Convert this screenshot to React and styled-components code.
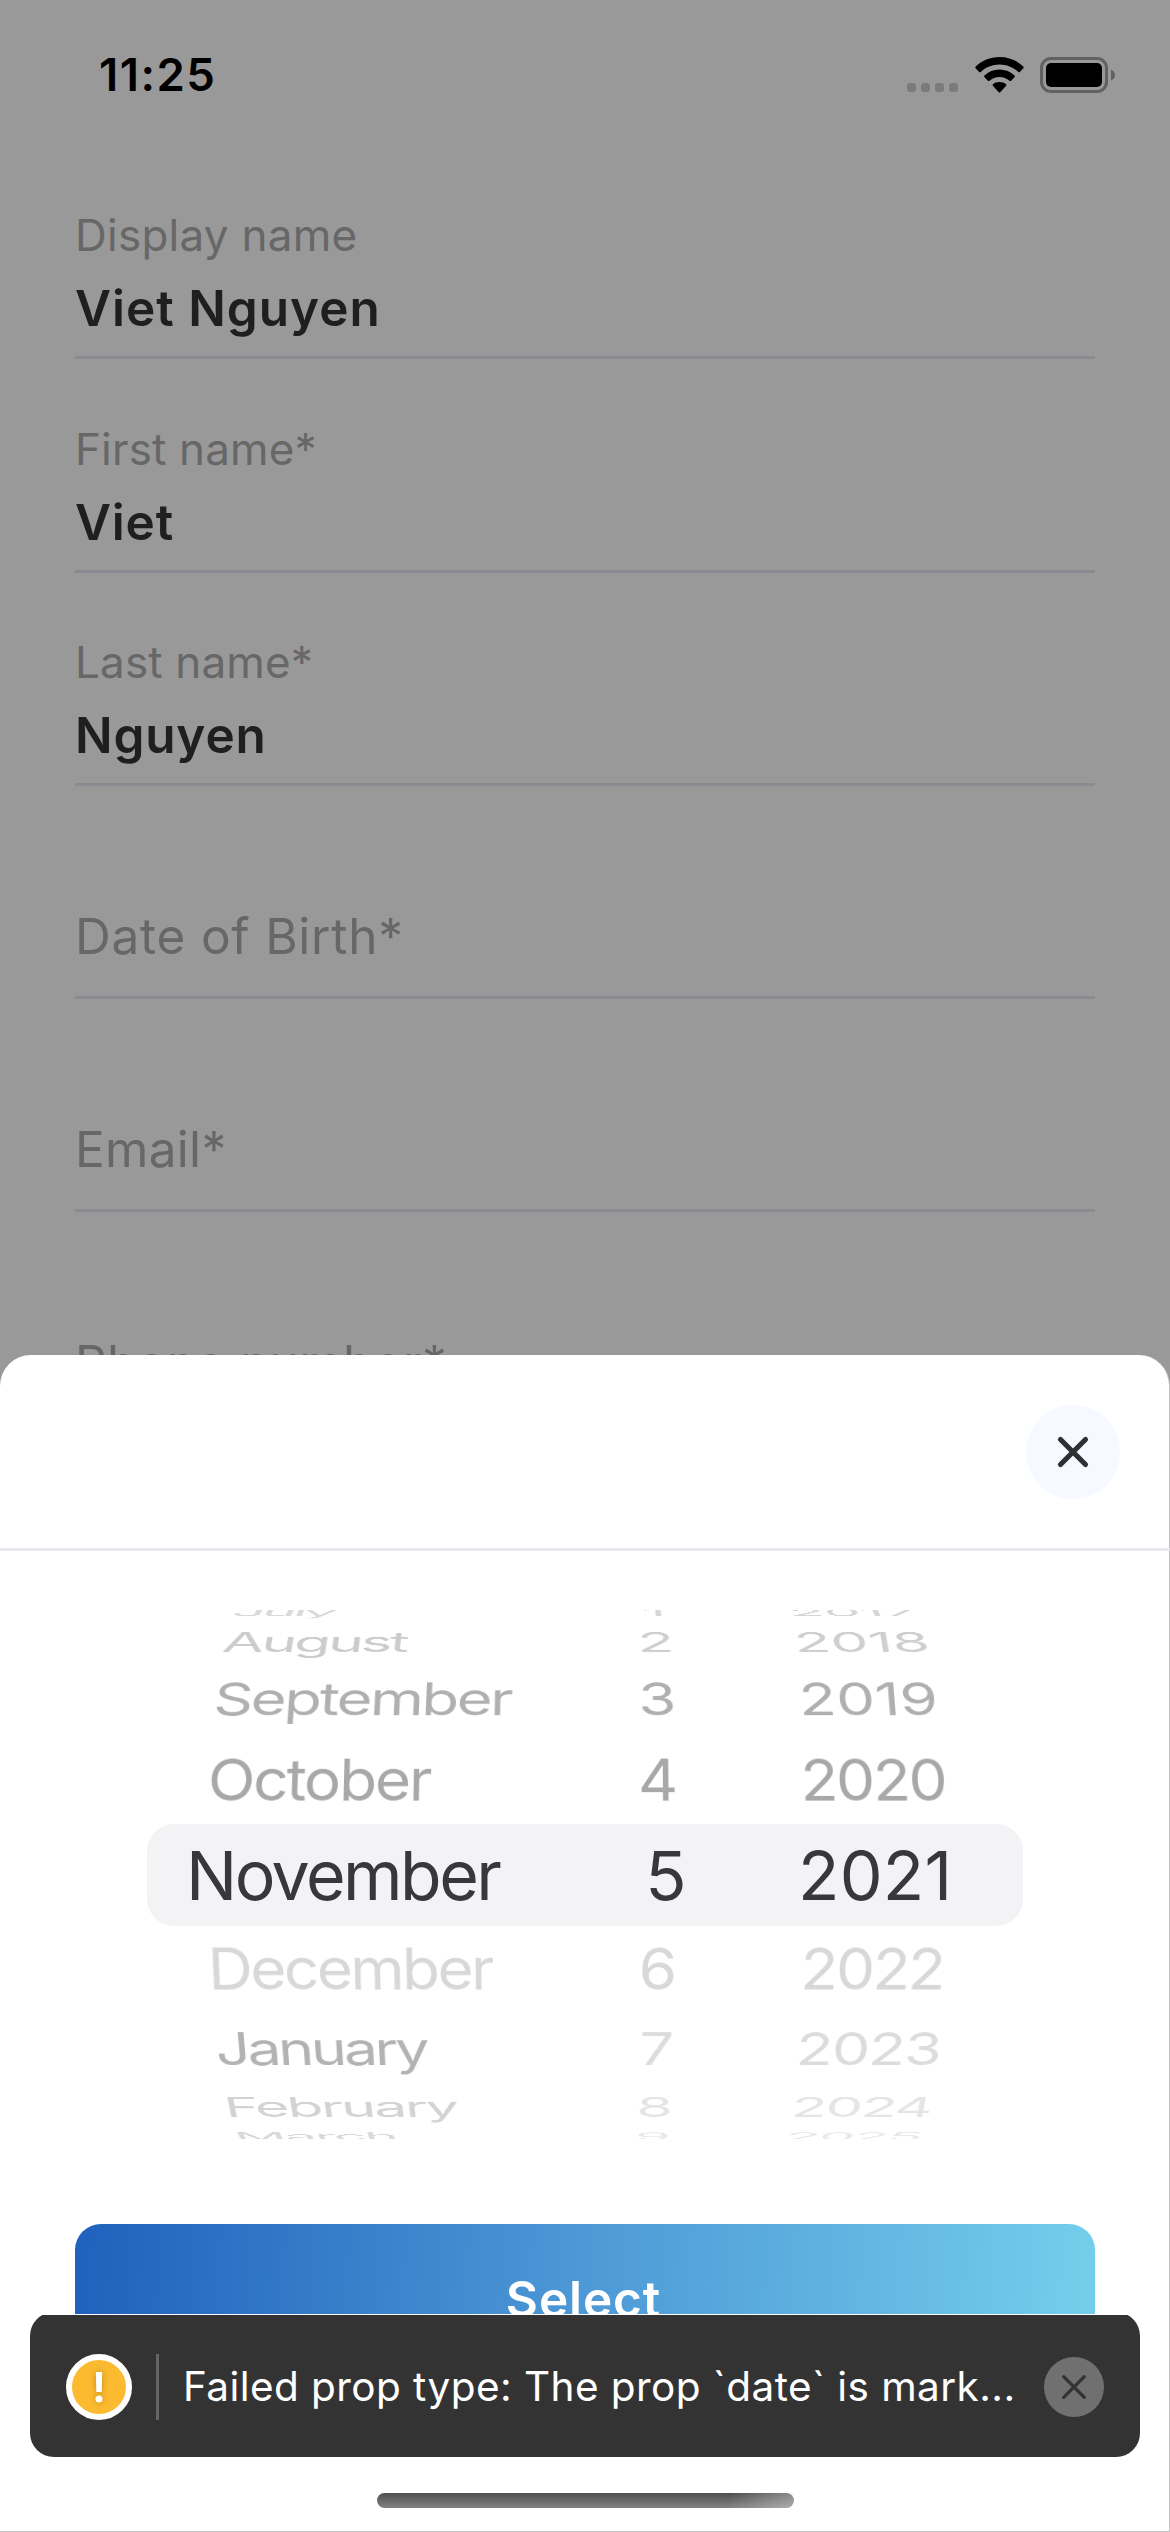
import React from "react";
import styled, { createGlobalStyle } from "styled-components";

const GlobalStyle = createGlobalStyle`
  *, *::before, *::after { box-sizing: border-box; }
  body {
    margin: 0;
    font-family: Inter, "Liberation Sans", sans-serif;
    background: #999999;
  }
`;

const Screen = styled.div`
  position: relative;
  width: 1170px;
  height: 2532px;
  overflow: hidden;
  background: #999999;
`;

/* ---------- status bar ---------- */

const StatusBar = styled.header`
  display: flex;
  align-items: center;
  justify-content: space-between;
  height: 149px;
  padding: 0 55px 0 99px;
`;

const Clock = styled.span`
  font-size: 45.5px;
  font-weight: 600;
  line-height: 50px;
  letter-spacing: 1.5px;
  color: #000;
`;

const StatusIcons = styled.div`
  display: flex;
  align-items: center;
`;

const SignalDots = styled.div`
  display: flex;
  gap: 5px;
  margin: 25px 17px 0 0;
`;

const SignalDot = styled.i`
  width: 9px;
  height: 9px;
  border-radius: 3px;
  background: #7b7b7b;
`;

const WifiIcon = styled.svg`
  width: 49px;
  height: 36px;
  margin-right: 16px;
`;

const BatteryIcon = styled.svg`
  width: 75px;
  height: 36px;
`;

/* ---------- form ---------- */

const Form = styled.main`
  display: flex;
  flex-direction: column;
  padding: 0 75px;
  margin-top: -3px;
`;

const Field = styled.div`
  display: flex;
  flex-direction: column;
  justify-content: flex-end;
  height: 213.25px;
  border-bottom: 3px solid #888b90;
`;

const FieldLabel = styled.span`
  font-size: 44px;
  line-height: 74px;
  letter-spacing: ${(p) => p.$tracking ?? 0.15}px;
  color: #676767;
`;

const FieldValue = styled.span`
  font-size: 49.5px;
  font-weight: 600;
  line-height: 72px;
  letter-spacing: ${(p) => p.$tracking}px;
  margin-bottom: 12px;
  color: #1f1f1f;
`;

const FieldPlaceholder = styled.span`
  font-size: 49.5px;
  line-height: 72px;
  letter-spacing: ${(p) => p.$tracking}px;
  margin-bottom: 24px;
  color: #676767;
`;

/* ---------- bottom sheet ---------- */

const Sheet = styled.section`
  position: absolute;
  left: 0;
  right: 0;
  bottom: 0;
  height: 1177px;
  display: flex;
  flex-direction: column;
  background: #fff;
  border-radius: 31px 31px 0 0;
  border-right: 1px solid #c0c0c0;
  border-bottom: 1px solid #c4c4c4;
`;

const SheetHeader = styled.div`
  display: flex;
  justify-content: flex-end;
  align-items: center;
  height: 196px;
  padding: 0 50px 0 0;
  margin-right: -1px;
  border-bottom: 3px solid #e6eaee;
`;

const CloseButton = styled.button`
  display: flex;
  align-items: center;
  justify-content: center;
  width: 94px;
  height: 94px;
  padding: 0;
  border: 0;
  border-radius: 50%;
  background: #f6f9ff;
`;

const Wheel = styled.div`
  display: flex;
  flex-direction: column;
  justify-content: center;
  width: 876px;
  height: 529px;
  margin: 59px auto 0 147px;
  overflow: hidden;
`;

const WheelRow = styled.div`
  flex: none;
  display: grid;
  grid-template-columns: 410px 80px 1fr;
  height: ${(p) => p.$height}px;
  padding-left: 61px;
  line-height: ${(p) => p.$height}px;
  font-size: 62px;
  white-space: nowrap;
  transform: perspective(3600px) rotateX(${(p) => p.$tilt}deg) scaleX(${(p) => p.$scale});
`;

const SelectedRow = styled(WheelRow)`
  grid-template-columns: 440px 80px 1fr;
  padding-left: 39px;
  font-size: 68px;
  transform: none;
  border-radius: 27px;
  background: #f3f3f5;
`;

const WheelCell = styled.span`
  color: ${(p) => p.$color};
  letter-spacing: ${(p) => p.$tracking ?? 0}px;
  text-align: ${(p) => p.$align ?? "left"};
  padding-left: ${(p) => p.$inset ?? 0}px;
`;

const SelectButton = styled.button`
  flex: none;
  display: flex;
  align-items: center;
  justify-content: center;
  width: 1020px;
  height: 150px;
  margin: 85px 0 0 75px;
  padding: 0 3px 0 0;
  border: 0;
  border-radius: 26px;
  background: linear-gradient(93deg, #2062bd 1%, #4f9bd7 52%, #73ceeb 99%);
  color: #fff;
  font-family: inherit;
  font-size: 49.5px;
  font-weight: 600;
  letter-spacing: 0.9px;
`;

/* ---------- warning toast ---------- */

const ToastLayer = styled.aside`
  position: absolute;
  left: 0;
  top: 2314px;
  width: 1169px;
  height: 143px;
  overflow: hidden;
  border-top: 1px solid #fff;
  background: #fff;
`;

const Toast = styled.div`
  display: flex;
  align-items: center;
  width: 1110px;
  height: 145px;
  margin: -3px 0 0 30px;
  padding: 5px 36px 0 36px;
  border-radius: 24px;
  background: #333333;
`;

const WarningBadge = styled.span`
  flex: none;
  display: flex;
  align-items: center;
  justify-content: center;
  width: 66px;
  height: 66px;
  border: 6px solid #fff;
  border-radius: 50%;
  background: #fbba30;
`;

const WarningMark = styled.svg`
  width: 54px;
  height: 54px;
  filter: drop-shadow(0 0 3px rgba(120, 80, 0, 0.45));
`;

const ToastDivider = styled.i`
  flex: none;
  width: 3px;
  height: 66px;
  margin: 0 24px;
  background: #656565;
`;

const ToastText = styled.span`
  flex: 1;
  font-size: 40.5px;
  line-height: 60px;
  letter-spacing: 0.43px;
  white-space: nowrap;
  color: #fff;
`;

const DismissButton = styled.button`
  flex: none;
  display: flex;
  align-items: center;
  justify-content: center;
  width: 60px;
  height: 60px;
  padding: 0;
  border: 0;
  border-radius: 50%;
  background: #707070;
`;

const HomeIndicator = styled.div`
  width: 417px;
  height: 15px;
  position: absolute;
  left: 377px;
  bottom: 24px;
  border-radius: 7.5px;
  background: linear-gradient(102deg, transparent 84%, rgba(255, 255, 255, 0.35) 100%),
    linear-gradient(#4f4f4f, #828282);
`;

/* ---------- content ---------- */

const filledFields = [
  { label: "Display name", labelTracking: 0.26, value: "Viet Nguyen", tracking: 0.99 },
  { label: "First name*", value: "Viet", tracking: 0.8 },
  { label: "Last name*", value: "Nguyen", tracking: 0.83 },
];

const emptyFields = [
  { label: "Date of Birth*", tracking: 0.78 },
  { label: "Email*", tracking: 0.3 },
  { label: "Phone number*", tracking: 0.39 },
];

const rowsAbove = [
  { height: 18.8, tilt: 80, scale: 0.945, month: "July", day: "1", year: "2017", mi: 4, mt: -3.8, yt: -0.6, mc: "#d9d9d9", c: "#d6d6d6" },
  { height: 40.2, tilt: 63.5, scale: 0.97, month: "August", day: "2", year: "2018", mi: 4, mt: -3, yt: -0.3, mc: "#cccccc", c: "#cfcfcf" },
  { height: 74.8, tilt: 43, scale: 0.992, month: "September", day: "3", year: "2019", mi: 3, mt: -2.46, yt: -0.1, mc: "#b0b0b0", c: "#b0b0b0" },
  { height: 86.6, tilt: 21, scale: 1, month: "October", day: "4", year: "2020", mi: 0, mt: -2.13, yt: -2.25, mc: "#a8a8a8", c: "#a8a8a8" },
];

const rowsBelow = [
  { height: 86.6, tilt: -21, scale: 1, month: "December", day: "6", year: "2022", mi: 0, mt: -2.55, yt: -2.38, mc: "#d8d8d8", c: "#d8d8d8" },
  { height: 74.8, tilt: -43, scale: 0.98, month: "January", day: "7", year: "2023", mi: 0, mt: -3.2, yt: -1.4, mc: "#b3b3b3", c: "#dcdcdc" },
  { height: 40.2, tilt: -63.5, scale: 0.957, month: "February", day: "8", year: "2024", mi: 0, mt: -2.4, yt: -1.8, mc: "#d3d3d3", c: "#e5e5e5" },
  { height: 18.8, tilt: -80, scale: 0.93, month: "March", day: "9", year: "2025", mi: 0, mt: -2.2, yt: -1.6, mc: "#d9d9d9", c: "#e9e9e9" },
];

function DateRow({ row }) {
  return (
    <WheelRow $height={row.height} $tilt={row.tilt} $scale={row.scale}>
      <WheelCell $color={row.mc} $tracking={row.mt} $inset={row.mi}>{row.month}</WheelCell>
      <WheelCell $color={row.c} $align="center">{row.day}</WheelCell>
      <WheelCell $color={row.c} $tracking={row.yt} $inset={102.5}>{row.year}</WheelCell>
    </WheelRow>
  );
}

export default function App() {
  return (
    <>
      <GlobalStyle />
      <Screen>
        <StatusBar>
          <Clock>11:25</Clock>
          <StatusIcons>
            <SignalDots>
              <SignalDot />
              <SignalDot />
              <SignalDot />
              <SignalDot />
            </SignalDots>
            <WifiIcon viewBox="0 0 49 36" fill="#000">
              <path d="M24.5 0C33.8 0 42.3 3.6 48.3 9.6C48.8 10.1 48.8 10.7 48.4 11.2L44.8 14.9C44.3 15.3 43.7 15.3 43.2 14.9C38.3 10.3 31.7 7.5 24.5 7.5S10.7 10.3 5.8 14.9C5.3 15.3 4.7 15.3 4.2 14.9L.6 11.2C.2 10.7 .2 10.1 .7 9.6C6.7 3.6 15.2 0 24.5 0Z" />
              <path d="M24.5 12.5C30.3 12.5 35.6 14.7 39.6 18.4C40.1 18.9 40.1 19.5 39.7 20L36.1 23.7C35.6 24.2 35 24.2 34.5 23.7C31.8 21.4 28.3 20 24.5 20S17.2 21.4 14.5 23.7C14 24.2 13.4 24.2 12.9 23.7L9.3 20C8.9 19.5 8.9 18.9 9.4 18.4C13.4 14.7 18.7 12.5 24.5 12.5Z" />
              <path d="M24.5 24.9C27.1 24.9 29.4 25.8 31.1 27.2C31.6 27.7 31.6 28.3 31.1 28.8L25.3 35.2C24.8 35.7 24.2 35.7 23.7 35.2L17.9 28.8C17.4 28.3 17.4 27.7 17.9 27.2C19.6 25.8 21.9 24.9 24.5 24.9Z" />
            </WifiIcon>
            <BatteryIcon viewBox="0 0 75 36">
              <rect x="1.5" y="1.5" width="65" height="33" rx="9.5" fill="none" stroke="#616161" strokeWidth="3" />
              <rect x="6" y="6" width="56" height="24" rx="5" fill="#000" />
              <path d="M71 12.5C73.5 13.5 75 15.5 75 18S73.5 22.5 71 23.5Z" fill="#616161" />
            </BatteryIcon>
          </StatusIcons>
        </StatusBar>

        <Form>
          {filledFields.map((f) => (
            <Field key={f.label}>
              <FieldLabel $tracking={f.labelTracking}>{f.label}</FieldLabel>
              <FieldValue $tracking={f.tracking}>{f.value}</FieldValue>
            </Field>
          ))}
          {emptyFields.map((f) => (
            <Field key={f.label}>
              <FieldPlaceholder $tracking={f.tracking}>{f.label}</FieldPlaceholder>
            </Field>
          ))}
        </Form>

        <Sheet>
          <SheetHeader>
            <CloseButton aria-label="Close">
              <svg width="34" height="34" viewBox="0 0 34 34" fill="none" stroke="#2f3033" strokeWidth="5.2" strokeLinecap="round">
                <path d="M4.5 4.5L29.5 29.5M29.5 4.5L4.5 29.5" />
              </svg>
            </CloseButton>
          </SheetHeader>
          <Wheel>
            {rowsAbove.map((row) => (
              <DateRow key={row.month} row={row} />
            ))}
            <SelectedRow $height={102}>
              <WheelCell $color="#38383a" $tracking={-2.54}>November</WheelCell>
              <WheelCell $color="#38383a" $align="center">5</WheelCell>
              <WheelCell $color="#38383a" $tracking={0.22} $inset={92}>2021</WheelCell>
            </SelectedRow>
            {rowsBelow.map((row) => (
              <DateRow key={row.month} row={row} />
            ))}
          </Wheel>
          <SelectButton>Select</SelectButton>
        </Sheet>

        <ToastLayer>
          <Toast>
            <WarningBadge>
              <WarningMark viewBox="0 0 54 54" fill="#fff">
                <path d="M23.8 12H30.2L29.7 32H24.3Z" />
                <circle cx="27" cy="39" r="3.5" />
              </WarningMark>
            </WarningBadge>
            <ToastDivider />
            <ToastText>Failed prop type: The prop `date` is mark...</ToastText>
            <DismissButton aria-label="Dismiss">
              <svg width="28" height="28" viewBox="0 0 28 28" fill="none" stroke="#333333" strokeWidth="3.3" strokeLinecap="round">
                <path d="M3.7 3.7L24.3 24.3M24.3 3.7L3.7 24.3" />
              </svg>
            </DismissButton>
          </Toast>
        </ToastLayer>
        <HomeIndicator />
      </Screen>
    </>
  );
}
